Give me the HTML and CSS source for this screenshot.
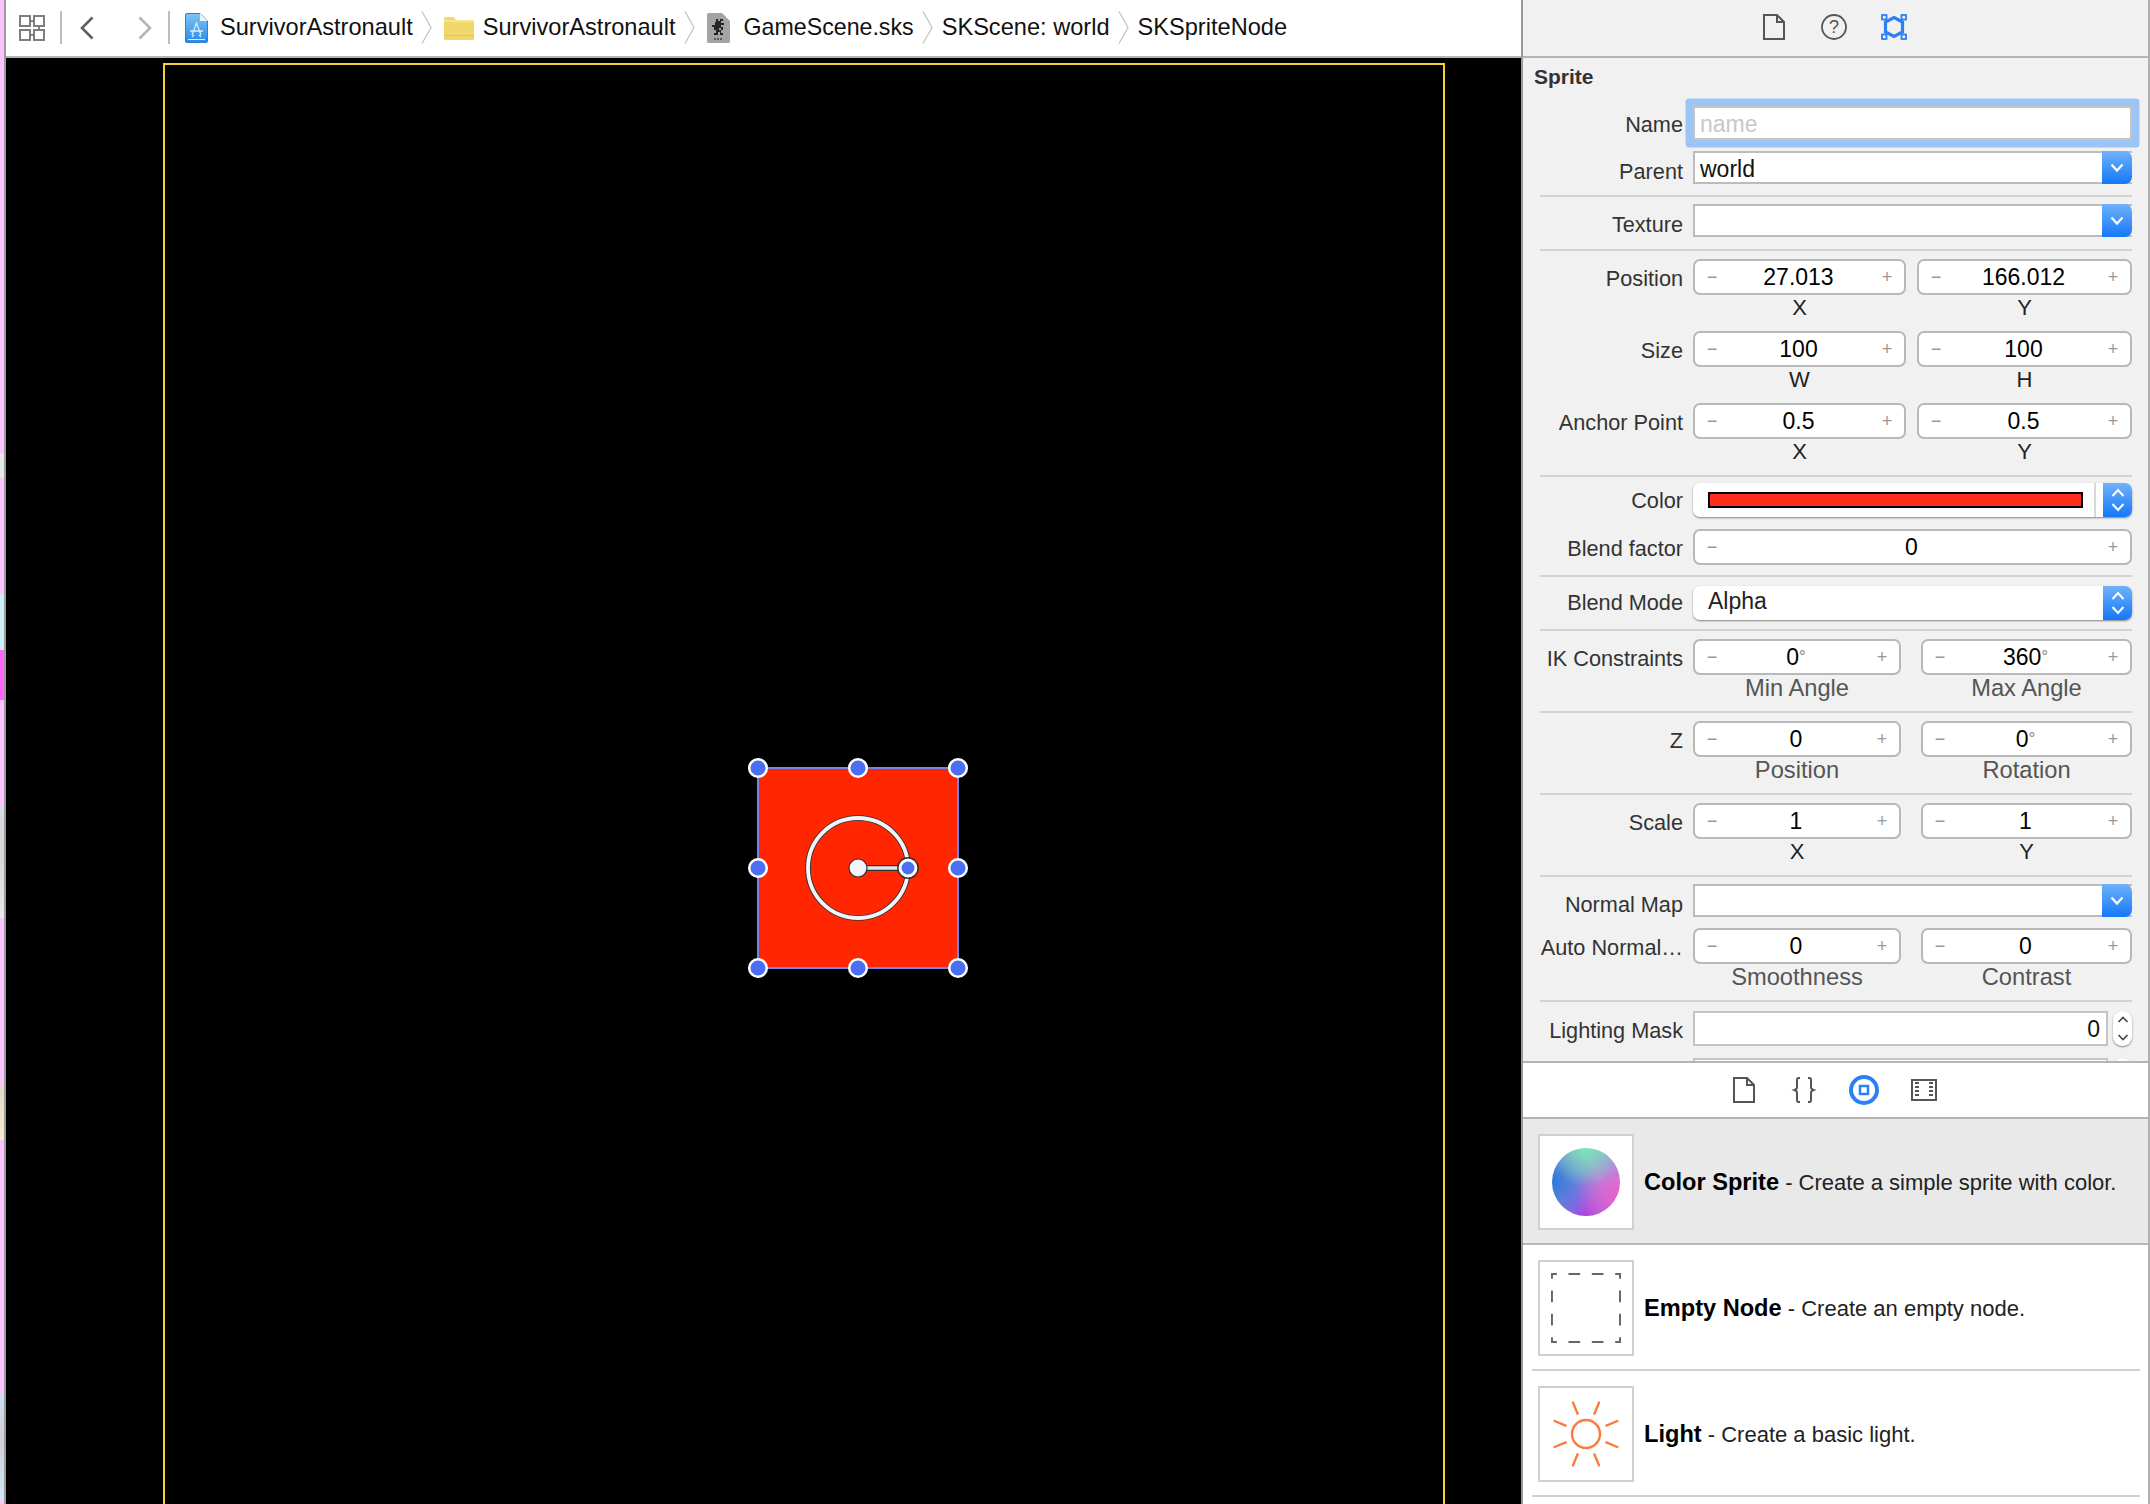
FILE: index.html
```html
<!DOCTYPE html>
<html lang="en">
<head>
    <meta charset="UTF-8">
    <title>GameScene.sks</title>
    <link rel="stylesheet" href="styles.css">
</head>
<body>
<div class="desktop-edge"></div>

<div class="editor">
    <div class="jumpbar">
        <svg class="icon-related" width="26" height="26" viewBox="0 0 26 26" fill="none" stroke="#7d7d7d" stroke-width="2">
            <rect x="1" y="1" width="10" height="10"/><rect x="15" y="1" width="10" height="10"/>
            <rect x="1" y="15" width="10" height="10"/><rect x="15" y="15" width="10" height="10"/>
            <path d="M11 6h4M11 20h4M20 11v4"/>
        </svg>
        <span class="bar-sep bar-sep-first"></span>
        <svg class="nav-back" width="14" height="24" viewBox="0 0 14 24" fill="none" stroke="#606060" stroke-width="2.6"><path d="M12.5 1.5 2 12l10.5 10.5"/></svg>
        <svg class="nav-forward" width="14" height="24" viewBox="0 0 14 24" fill="none" stroke="#b4b4b4" stroke-width="2.6"><path d="M1.5 1.5 12 12 1.5 22.5"/></svg>
        <span class="bar-sep bar-sep-second"></span>

        <svg class="crumb-icon crumb-icon-app" width="23" height="30" viewBox="0 0 23 30">
            <defs>
                <linearGradient id="appBlue" x1="0" y1="0" x2="0" y2="1">
                    <stop offset="0" stop-color="#7cc4f8"/><stop offset="1" stop-color="#2a8ae8"/>
                </linearGradient>
            </defs>
            <path d="M.5 2a1.500 1.500 0 0 1 1.500-1.500H15L22.500 8v20a1.500 1.500 0 0 1-1.500 1.500H2A1.500 1.500 0 0 1 .5 28z" fill="url(#appBlue)" stroke="#2f7fd0"/>
            <path d="M15 .5V8h7.500z" fill="#eaf4fc"/>
            <path d="M3 26.500h17" stroke="#d4ebfb" fill="none"/>
            <path d="M7 22 11.500 10 16 22M5 18h13M9 22l-2 2M14 22l2 2" stroke="#d8eefc" stroke-width="1.300" fill="none"/>
        </svg>
        <span class="crumb">SurvivorAstronault</span>
        <svg class="crumb-arrow" width="11" height="33" viewBox="0 0 11 33" fill="none" stroke="#c4c4c4" stroke-width="1.300"><path d="M1 .5 10 16.500 1 32.500"/></svg>

        <svg class="crumb-icon crumb-icon-folder" width="30" height="24" viewBox="0 0 30 24">
            <path d="M0 2.500A1.500 1.500 0 0 1 1.500 1h8l2.500 3h16.500A1.500 1.500 0 0 1 30 5.500v17a1.500 1.500 0 0 1-1.500 1.500h-27A1.500 1.500 0 0 1 0 22.500z" fill="#efd76a"/>
            <path d="M0 5h30" stroke="#f8e9a0" stroke-width="1.500"/>
            <path d="M0 19.500h30" stroke="#e0c650"/>
        </svg>
        <span class="crumb">SurvivorAstronault</span>
        <svg class="crumb-arrow" width="11" height="33" viewBox="0 0 11 33" fill="none" stroke="#c4c4c4" stroke-width="1.300"><path d="M1 .5 10 16.500 1 32.500"/></svg>

        <svg class="crumb-icon crumb-icon-sks" width="23" height="30" viewBox="0 0 23 30">
            <path d="M0 1.500A1.500 1.500 0 0 1 1.500 0H15l8 8v20.500a1.500 1.500 0 0 1-1.500 1.500h-20A1.500 1.500 0 0 1 0 28.500z" fill="#a4a4a4"/>
            <path d="M9 6h2v2h2V6h3v2h-2v2h3v2h-3v2h2v3h-2v-2h-2v2h2v3h2v2h-3v-3h-2v3H7v-2h2v-3H7v-3H5v-2h3V9h1z" fill="#262626"/>
            <path d="M7 26h9" stroke="#444" stroke-width="1.500" stroke-dasharray="2 1"/>
        </svg>
        <span class="crumb crumb-tight">GameScene.sks</span>
        <svg class="crumb-arrow" width="11" height="33" viewBox="0 0 11 33" fill="none" stroke="#c4c4c4" stroke-width="1.300"><path d="M1 .5 10 16.500 1 32.500"/></svg>
        <span class="crumb">SKScene: world</span>
        <svg class="crumb-arrow" width="11" height="33" viewBox="0 0 11 33" fill="none" stroke="#c4c4c4" stroke-width="1.300"><path d="M1 .5 10 16.500 1 32.500"/></svg>
        <span class="crumb">SKSpriteNode</span>
    </div>

    <div class="scene">
        <div class="scene-frame"></div>
        <svg class="sprite" width="240" height="240" viewBox="0 0 240 240">
            <rect x="20" y="20" width="200" height="200" fill="#ff2600" stroke="#6f86ea" stroke-width="2"/>
            <g fill="#4a6ff2" stroke="#fff" stroke-width="2.500">
                <circle cx="20" cy="20" r="8.800"/><circle cx="120" cy="20" r="8.800"/><circle cx="220" cy="20" r="8.800"/>
                <circle cx="20" cy="120" r="8.800"/><circle cx="220" cy="120" r="8.800"/>
                <circle cx="20" cy="220" r="8.800"/><circle cx="120" cy="220" r="8.800"/><circle cx="220" cy="220" r="8.800"/>
            </g>
            <circle cx="120" cy="120" r="50" fill="none" stroke="#333" stroke-width="5.600"/>
            <circle cx="120" cy="120" r="50" fill="none" stroke="#f4f4f8" stroke-width="3.800"/>
            <path d="M120 120h50" stroke="#333" stroke-width="6"/>
            <path d="M120 120h50" stroke="#e4e4ea" stroke-width="3.500"/>
            <circle cx="120" cy="120" r="9" fill="#f4f4ff" stroke="#333" stroke-width="1.200"/>
            <circle cx="170" cy="120" r="8" fill="#4a6ff2" stroke="#fff" stroke-width="3"/>
            <circle cx="170" cy="120" r="10.200" fill="none" stroke="#333" stroke-width="1.400"/>
        </svg>
    </div>
</div>

<div class="inspector">
    <div class="tab-bar tab-bar-top">
        <svg width="22" height="26" viewBox="0 0 22 26" fill="none" stroke="#555" stroke-width="2"><path d="M1 1h13l7 7v17H1zM14 1v7h7"/></svg>
        <svg width="26" height="26" viewBox="0 0 26 26">
            <circle cx="13" cy="13" r="12" fill="none" stroke="#555" stroke-width="1.800"/>
            <text x="13" y="19" text-anchor="middle" class="help-mark">?</text>
        </svg>
        <svg width="26" height="26" viewBox="0 0 26 26" fill="none" stroke="#2b80f6">
            <path d="M13 3.500 21.500 8v10L13 22.500 4.500 18V8z" stroke-width="3.200"/>
            <g stroke-width="1.800">
                <rect x="1" y="1" width="4.500" height="4.500"/><rect x="20.500" y="1" width="4.500" height="4.500"/>
                <rect x="1" y="20.500" width="4.500" height="4.500"/><rect x="20.500" y="20.500" width="4.500" height="4.500"/>
            </g>
        </svg>
    </div>

    <div class="attributes">
        <div class="section-title">Sprite</div>

        <div class="group group-identity">
            <div class="row">
                <div class="label label-field">Name</div>
                <div class="text-field text-field-focus placeholder">name</div>
            </div>
            <div class="row">
                <div class="label label-combo">Parent</div>
                <div class="combo">
                    <span class="combo-value">world</span>
                    <span class="combo-button">
                        <svg width="14" height="10" viewBox="0 0 14 10" fill="none" stroke="#fff" stroke-width="2.200"><path d="M1.500 1.500 7 7.500l5.500-6"/></svg>
                    </span>
                </div>
            </div>
        </div>

        <div class="group group-texture">
            <div class="row">
                <div class="label label-combo">Texture</div>
                <div class="combo">
                    <span class="combo-value"></span>
                    <span class="combo-button">
                        <svg width="14" height="10" viewBox="0 0 14 10" fill="none" stroke="#fff" stroke-width="2.200"><path d="M1.500 1.500 7 7.500l5.500-6"/></svg>
                    </span>
                </div>
            </div>
        </div>

        <div class="group group-geometry">
            <div class="row">
                <div class="label">Position</div>
                <div class="pair pair-wide">
                    <div><div class="stepper"><span class="step">−</span><span class="value">27.013</span><span class="step">+</span></div><div class="caption caption-dark">X</div></div>
                    <div><div class="stepper"><span class="step">−</span><span class="value">166.012</span><span class="step">+</span></div><div class="caption caption-dark">Y</div></div>
                </div>
            </div>
            <div class="row">
                <div class="label">Size</div>
                <div class="pair pair-wide">
                    <div><div class="stepper"><span class="step">−</span><span class="value">100</span><span class="step">+</span></div><div class="caption caption-dark">W</div></div>
                    <div><div class="stepper"><span class="step">−</span><span class="value">100</span><span class="step">+</span></div><div class="caption caption-dark">H</div></div>
                </div>
            </div>
            <div class="row">
                <div class="label">Anchor Point</div>
                <div class="pair pair-wide">
                    <div><div class="stepper"><span class="step">−</span><span class="value">0.5</span><span class="step">+</span></div><div class="caption caption-dark">X</div></div>
                    <div><div class="stepper"><span class="step">−</span><span class="value">0.5</span><span class="step">+</span></div><div class="caption caption-dark">Y</div></div>
                </div>
            </div>
        </div>

        <div class="group group-color">
            <div class="row">
                <div class="label label-color">Color</div>
                <div class="popup">
                    <span class="color-well"><span class="color-swatch"></span></span>
                    <span class="popup-button">
                        <svg width="16" height="26" viewBox="0 0 16 26" fill="none" stroke="#fff" stroke-width="2"><path d="M2.500 9 8 3l5.500 6M2.500 17 8 23l5.500-6"/></svg>
                    </span>
                </div>
            </div>
            <div class="row">
                <div class="label">Blend factor</div>
                <div class="stepper"><span class="step">−</span><span class="value">0</span><span class="step">+</span></div>
            </div>
        </div>

        <div class="group group-blend">
            <div class="row">
                <div class="label label-blend">Blend Mode</div>
                <div class="popup">
                    <span class="popup-value">Alpha</span>
                    <span class="popup-button">
                        <svg width="16" height="26" viewBox="0 0 16 26" fill="none" stroke="#fff" stroke-width="2"><path d="M2.500 9 8 3l5.500 6M2.500 17 8 23l5.500-6"/></svg>
                    </span>
                </div>
            </div>
        </div>

        <div class="group">
            <div class="row">
                <div class="label">IK Constraints</div>
                <div class="pair pair-narrow">
                    <div><div class="stepper"><span class="step">−</span><span class="value">0<span class="deg">°</span></span><span class="step">+</span></div><div class="caption">Min Angle</div></div>
                    <div><div class="stepper"><span class="step">−</span><span class="value">360<span class="deg">°</span></span><span class="step">+</span></div><div class="caption">Max Angle</div></div>
                </div>
            </div>
        </div>

        <div class="group">
            <div class="row">
                <div class="label">Z</div>
                <div class="pair pair-narrow">
                    <div><div class="stepper"><span class="step">−</span><span class="value">0</span><span class="step">+</span></div><div class="caption">Position</div></div>
                    <div><div class="stepper"><span class="step">−</span><span class="value">0<span class="deg">°</span></span><span class="step">+</span></div><div class="caption">Rotation</div></div>
                </div>
            </div>
        </div>

        <div class="group">
            <div class="row">
                <div class="label">Scale</div>
                <div class="pair pair-narrow">
                    <div><div class="stepper"><span class="step">−</span><span class="value">1</span><span class="step">+</span></div><div class="caption caption-dark">X</div></div>
                    <div><div class="stepper"><span class="step">−</span><span class="value">1</span><span class="step">+</span></div><div class="caption caption-dark">Y</div></div>
                </div>
            </div>
        </div>

        <div class="group group-normal">
            <div class="row">
                <div class="label label-combo">Normal Map</div>
                <div class="combo">
                    <span class="combo-value"></span>
                    <span class="combo-button">
                        <svg width="14" height="10" viewBox="0 0 14 10" fill="none" stroke="#fff" stroke-width="2.200"><path d="M1.500 1.500 7 7.500l5.500-6"/></svg>
                    </span>
                </div>
            </div>
            <div class="row">
                <div class="label">Auto Normal…</div>
                <div class="pair pair-narrow">
                    <div><div class="stepper"><span class="step">−</span><span class="value">0</span><span class="step">+</span></div><div class="caption">Smoothness</div></div>
                    <div><div class="stepper"><span class="step">−</span><span class="value">0</span><span class="step">+</span></div><div class="caption">Contrast</div></div>
                </div>
            </div>
        </div>

        <div class="group group-mask">
            <div class="row">
                <div class="label">Lighting Mask</div>
                <div class="mask-control">
                    <div class="text-field mask-value">0</div>
                    <span class="mini-stepper">
                        <svg width="12" height="27" viewBox="0 0 12 27" fill="none" stroke="#444" stroke-width="1.600"><path d="M1.500 7 6 2.500 10.500 7M1.500 20 6 24.500 10.500 20"/></svg>
                    </span>
                </div>
            </div>
            <div class="row">
                <div class="label"></div>
                <div class="mask-control">
                    <div class="text-field mask-value"></div>
                    <span class="mini-stepper"></span>
                </div>
            </div>
        </div>
    </div>

    <div class="tab-bar tab-bar-library">
        <svg width="22" height="26" viewBox="0 0 22 26" fill="none" stroke="#555" stroke-width="2"><path d="M1 1h13l7 7v17H1zM14 1v7h7"/></svg>
        <svg width="22" height="26" viewBox="0 0 22 26" fill="none" stroke="#555" stroke-width="2"><path d="M7 1H5.500C4 1 4 2 4 3v7c0 1.500-1 2.500-2.500 3C3 13.500 4 14.500 4 16v7c0 1 0 2 1.500 2H7M15 1h1.500C18 1 18 2 18 3v7c0 1.500 1 2.500 2.500 3-1.500.5-2.500 1.500-2.500 3v7c0 1 0 2-1.500 2H15"/></svg>
        <svg width="30" height="30" viewBox="0 0 30 30" fill="none" stroke="#2b80f6">
            <circle cx="15" cy="15" r="13" stroke-width="4"/>
            <rect x="11" y="11" width="8" height="8" stroke-width="2.500"/>
        </svg>
        <svg width="26" height="22" viewBox="0 0 26 22" fill="none" stroke="#555" stroke-width="2">
            <rect x="1" y="1" width="24" height="20"/>
            <path d="M6 3v2M6 7v2M6 11v2M6 15v2M20 3v2M20 7v2M20 11v2M20 15v2" stroke-width="4"/>
        </svg>
    </div>

    <div class="library">
        <div class="library-item library-item-selected">
            <div class="thumb"><div class="sphere"></div></div>
            <div class="item-text"><b>Color Sprite</b> - Create a simple sprite with color.</div>
        </div>
        <div class="library-item">
            <div class="thumb">
                <svg width="70" height="70" viewBox="0 0 72 72" fill="none" stroke="#666" stroke-width="2">
                    <path d="M1 6V1h5M18 1h12M42 1h12M66 1h5v5M71 18v12M71 42v12M71 66v5h-5M54 71H42M30 71H18M6 71H1v-5M1 54V42M1 30V18"/>
                </svg>
            </div>
            <div class="item-text"><b>Empty Node</b> - Create an empty node.</div>
        </div>
        <div class="library-item">
            <div class="thumb">
                <svg width="76" height="76" viewBox="0 0 76 76" fill="none" stroke="#fb7a3c" stroke-width="2.400" stroke-linecap="round">
                    <circle cx="38" cy="38" r="14"/>
                    <path d="M29.600 17.700 25 6.600M46.400 17.700 51 6.600M58.300 29.600 69.400 25M58.300 46.400 69.400 51M46.400 58.300 51 69.400M29.600 58.300 25 69.400M17.700 46.400 6.600 51M17.700 29.600 6.600 25"/>
                </svg>
            </div>
            <div class="item-text"><b>Light</b> - Create a basic light.</div>
        </div>
    </div>
</div>
</body>
</html>
```

FILE: styles.css
```css
* {
    box-sizing: border-box;
}

html, body {
    margin: 0;
    height: 100%;
}

body {
    display: flex;
    width: 2150px;
    height: 1504px;
    overflow: hidden;
    font-family: "Liberation Sans", Arial, sans-serif;
    color: #222;
    background-color: #fff;
}

.desktop-edge {
    flex: 0 0 6px;
    border-right: 2px solid #9c9c9c;
    background: linear-gradient(to bottom,
        #fcc4fc 0, #fcc4fc 453px,
        #e8e8e8 453px, #e8e8e8 478px,
        #fcc4fc 478px, #fcc4fc 593px,
        #cdeef5 593px, #cdeef5 650px,
        #ff66ff 650px, #ff66ff 700px,
        #fcc4fc 700px, #fcc4fc 805px,
        #d4dce4 805px, #d8d8d8 860px, #ece8ee 918px,
        #fcc4fc 918px, #fcc4fc 1085px,
        #e0d8cc 1085px, #f8eecc 1140px,
        #fcc4fc 1140px, #fcc4fc 1393px,
        #cfe0f2 1393px, #d0d0d8 1440px, #cfe8f8 1500px,
        #fcc4fc 1500px);
}

/* editor side */
.editor {
    flex: 0 0 1515px;
    display: flex;
    flex-direction: column;
}

.jumpbar {
    flex: 0 0 58px;
    display: flex;
    align-items: center;
    padding-left: 13px;
    padding-bottom: 1px;
    border-bottom: 2px solid #b4b4b4;
    background-color: #fff;
}

.bar-sep {
    width: 2px;
    height: 33px;
    background-color: #bdbdbd;
}

.bar-sep-first {
    margin-left: 15px;
}

.nav-back {
    margin-left: 18px;
}

.nav-forward {
    margin-left: 44px;
}

.bar-sep-second {
    margin-left: 16px;
}

.crumb-icon {
    flex: none;
}

.crumb-icon-app {
    margin-left: 15px;
    margin-right: 12px;
}

.crumb-icon-folder {
    margin-left: 3px;
    margin-right: 9px;
}

.crumb-icon-sks {
    margin-left: 3px;
    margin-right: 14px;
}

.crumb {
    font-size: 23.6px;
    color: #111;
    white-space: nowrap;
}

.crumb-tight {
    font-size: 23.2px;
}

.crumb-arrow {
    flex: none;
    margin: 0 8.5px;
}

.scene {
    position: relative;
    flex: 1;
    padding: 5px 0 0 157px;
    overflow: hidden;
    background-color: #000;
}

.scene-frame {
    width: 1282px;
    height: 1600px;
    border: 2px solid #f7d038;
}

.sprite {
    position: absolute;
    left: 732px;
    top: 690px;
}

/* inspector side */
.inspector {
    flex: 0 0 629px;
    display: flex;
    flex-direction: column;
    border-left: 2px solid #9a9a9a;
    border-right: 2px solid #b0b0b0;
}

.tab-bar {
    display: flex;
    align-items: center;
    justify-content: center;
    gap: 30px;
    padding-right: 3px;
}

.tab-bar svg {
    flex: 0 0 30px;
    width: 30px;
}

.tab-bar-top {
    flex: 0 0 58px;
    padding-bottom: 2px;
    border-bottom: 2px solid #b4b4b4;
    background-color: #f1f1f1;
}

.help-mark {
    font-size: 18px;
    fill: #555;
}

.attributes {
    flex: 0 0 1003px;
    overflow: hidden;
    background-color: #f1f1f1;
}

.section-title {
    height: 40px;
    padding-left: 11px;
    font-size: 21px;
    font-weight: bold;
    line-height: 38px;
    color: #333;
}

.group {
    display: flex;
    flex-direction: column;
    gap: 12px;
    margin: 0 16px 0 17px;
    padding: 8px 0 11px;
    border-bottom: 2px solid #d3d3d3;
}

.group-identity {
    gap: 11px;
}

.group-texture {
    padding: 7px 0 12px;
}

.group-geometry {
    padding-bottom: 12px;
}

.group-color {
    padding: 6px 0 10px;
}

.group-blend {
    padding: 9px 0;
}

.group-normal {
    gap: 11px;
    padding-top: 7px;
}

.group-mask {
    padding-top: 9px;
    border-bottom: none;
}

.row {
    display: grid;
    grid-template-columns: 143px 1fr;
    column-gap: 10px;
}

.label {
    height: 33px;
    font-size: 21.7px;
    line-height: 39px;
    text-align: right;
    white-space: nowrap;
    color: #333;
}

.label-field {
    line-height: 38px;
}

.label-combo {
    line-height: 42px;
}

.label-color {
    line-height: 36px;
}

.label-blend {
    line-height: 34px;
}

.pair {
    display: grid;
}

.pair-wide {
    grid-template-columns: 213px 215px;
    column-gap: 11px;
}

.pair-narrow {
    grid-template-columns: 208px 211px;
    column-gap: 20px;
}

.stepper {
    display: flex;
    align-items: center;
    height: 36px;
    padding: 0 11px;
    border: 2px solid #b8b8b8;
    border-radius: 7px;
    background-color: #fff;
}

.step {
    width: 12px;
    font-size: 18px;
    line-height: 30px;
    text-align: center;
    color: #999;
}

.value {
    flex: 1;
    padding-right: 2px;
    font-size: 23px;
    text-align: center;
    color: #000;
}

.deg {
    position: relative;
    top: -3px;
    font-size: 17px;
    color: #888;
}

.caption {
    height: 24px;
    font-size: 23.7px;
    line-height: 26px;
    text-align: center;
    color: #555;
}

.pair-narrow .caption {
    height: 25px;
}

.caption-dark {
    font-size: 22px;
    line-height: 25px;
    color: #222;
}

.text-field {
    height: 34px;
    padding-left: 5px;
    border: 2px solid #c4c4c4;
    font-size: 23px;
    line-height: 32px;
    background-color: #fff;
}

.text-field-focus {
    border-radius: 1px;
    box-shadow: 0 0 0 7.5px #9cc5f5;
}

.placeholder {
    color: #c8c8c8;
}

.combo {
    display: flex;
    height: 33px;
    border: 2px solid #bcbcbc;
    border-right: none;
    background-color: #fff;
}

.combo-value {
    flex: 1;
    padding-left: 5px;
    font-size: 23px;
    line-height: 32px;
    color: #111;
}

.combo-button, .popup-button {
    display: flex;
    align-items: center;
    justify-content: center;
    margin: -2px 0;
    border-radius: 0 7px 7px 0;
    background: linear-gradient(to bottom, #6fb2fb, #1478f8);
}

.combo-button {
    flex: 0 0 30px;
}

.popup {
    display: flex;
    height: 34px;
    border-radius: 7px;
    background-color: #fff;
    box-shadow: 0 1px 2px rgba(0, 0, 0, 0.45);
}

.popup-value {
    flex: 1;
    padding-left: 15px;
    font-size: 23px;
    line-height: 31px;
    color: #222;
}

.popup-button {
    flex: 0 0 29px;
    margin: 0;
}

.color-well {
    flex: 1;
    display: flex;
    align-items: center;
    padding: 0 11px 0 15px;
    margin-right: 7px;
    border-right: 2px solid #d8d8d8;
}

.color-swatch {
    width: 100%;
    height: 16px;
    border: 2px solid #000;
    background-color: #ff2d1b;
}

.mask-control {
    display: flex;
    gap: 5px;
}

.mask-value {
    flex: 0 0 415px;
    height: 35px;
    padding: 0 6px 0 0;
    font-size: 23px;
    text-align: right;
    color: #111;
}

.mini-stepper {
    display: flex;
    align-items: center;
    justify-content: center;
    flex: 0 0 19px;
    height: 35px;
    border-radius: 9px;
    background-color: #fff;
    box-shadow: 0 1px 2px rgba(0, 0, 0, 0.45);
}

/* library */
.tab-bar-library {
    flex: 0 0 58px;
    border-top: 2px solid #b4b4b4;
    border-bottom: 2px solid #b4b4b4;
    background-color: #fff;
}

.library {
    flex: 1;
    background-color: #fff;
}

.library-item {
    display: flex;
    align-items: center;
    gap: 10px;
    height: 126px;
    margin: 0 8px 0 9px;
    padding: 1px 0 0 6px;
    border-bottom: 2px solid #d0d0d0;
}

.library-item-selected {
    margin: 0;
    padding-left: 15px;
    border-bottom-color: #b8b8b8;
    background-color: #e9e9e9;
}

.thumb {
    display: flex;
    align-items: center;
    justify-content: center;
    flex: 0 0 96px;
    height: 96px;
    border: 2px solid #d0d0d0;
    background-color: #fff;
}

.sphere {
    width: 68px;
    height: 68px;
    border-radius: 50%;
    background:
        radial-gradient(circle at 50% 0, #7ce8b0 0, rgba(124, 232, 176, 0) 50%),
        radial-gradient(circle at 100% 70%, #f05cc8 0, rgba(240, 92, 200, 0) 55%),
        radial-gradient(circle at 0 50%, #2a78d8 0, rgba(42, 120, 216, 0) 60%),
        radial-gradient(circle at 50% 100%, #a040e0 0, rgba(160, 64, 224, 0) 55%),
        #9a9ae4;
}

.item-text {
    padding-top: 1px;
    font-size: 22px;
    color: #222;
    white-space: nowrap;
}

.item-text b {
    font-size: 23.6px;
    color: #000;
}
```
